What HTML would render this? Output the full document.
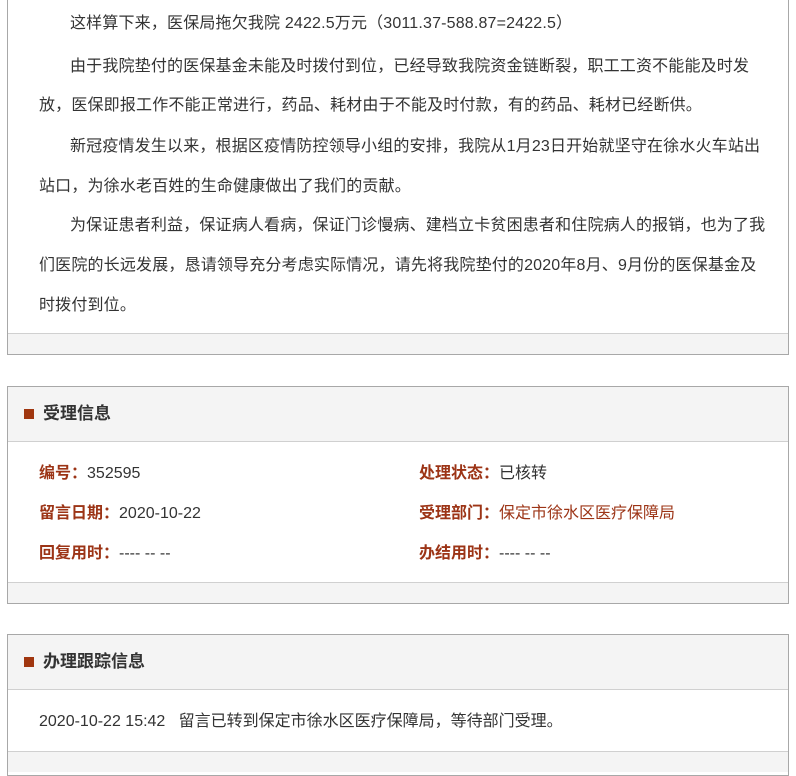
<!DOCTYPE html>
<html><head><meta charset="utf-8"><style>
body{margin:0;background:#fff;font-family:"Liberation Sans","Noto Sans CJK SC",sans-serif;color:#333;font-size:16px;width:796px;height:759px;overflow:hidden;position:relative}
.box{position:absolute;left:7px;width:780px;border:1px solid #a8a8a8;background:#fff}
.foot{background:#f4f4f4;border-top:1px solid #d0d0d0;height:20px}
.hd{height:54px;background:#f4f4f4;border-bottom:1px solid #d0d0d0;position:relative}
.hd i{position:absolute;left:16px;top:22px;width:10px;height:10px;background:#a0360f}
.hd b{position:absolute;left:35px;top:15px;font-size:17px;color:#333;line-height:24px}
.p{position:absolute;left:31px;white-space:nowrap;line-height:20px}
.t .p{letter-spacing:0.17px}
.l{color:#9c3416;font-weight:bold}
.br{color:#9c3416}
</style></head><body>
<div class="box t" style="top:-10px;height:364px;border-top:none">
<div class="p" style="top:24px;left:62px">这样算下来，医保局拖欠我院 2422.5万元（3011.37-588.87=2422.5）</div>
<div class="p" style="top:67px;left:62px">由于我院垫付的医保基金未能及时拨付到位，已经导致我院资金链断裂，职工工资不能能及时发</div>
<div class="p" style="top:106px">放，医保即报工作不能正常进行，药品、耗材由于不能及时付款，有的药品、耗材已经断供。</div>
<div class="p" style="top:147px;left:62px">新冠疫情发生以来，根据区疫情防控领导小组的安排，我院从1月23日开始就坚守在徐水火车站出</div>
<div class="p" style="top:187px">站口，为徐水老百姓的生命健康做出了我们的贡献。</div>
<div class="p" style="top:226px;left:62px">为保证患者利益，保证病人看病，保证门诊慢病、建档立卡贫困患者和住院病人的报销，也为了我</div>
<div class="p" style="top:266px">们医院的长远发展，恳请领导充分考虑实际情况，请先将我院垫付的2020年8月、9月份的医保基金及</div>
<div class="p" style="top:306px">时拨付到位。</div>
<div class="foot" style="position:absolute;left:0;right:0;top:343px"></div>
</div>

<div class="box" style="top:386px;height:216px">
<div class="hd"><i></i><b>受理信息</b></div>
<div class="p" style="top:77px"><span class="l">编号：</span>352595</div>
<div class="p" style="top:117px"><span class="l">留言日期：</span>2020-10-22</div>
<div class="p" style="top:157px"><span class="l">回复用时：</span>---- -- --</div>
<div class="p" style="top:77px;left:411px"><span class="l">处理状态：</span>已核转</div>
<div class="p" style="top:117px;left:411px"><span class="l">受理部门：</span><span class="br">保定市徐水区医疗保障局</span></div>
<div class="p" style="top:157px;left:411px"><span class="l">办结用时：</span>---- -- --</div>
<div class="foot" style="position:absolute;left:0;right:0;top:195px"></div>
</div>

<div class="box" style="top:634px;height:140px">
<div class="hd"><i></i><b>办理跟踪信息</b></div>
<div class="p" style="top:77px">2020-10-22 15:42&nbsp;&nbsp;&nbsp;留言已转到保定市徐水区医疗保障局，等待部门受理。</div>
<div class="foot" style="position:absolute;left:0;right:0;top:116px"></div>
</div>
</body></html>
